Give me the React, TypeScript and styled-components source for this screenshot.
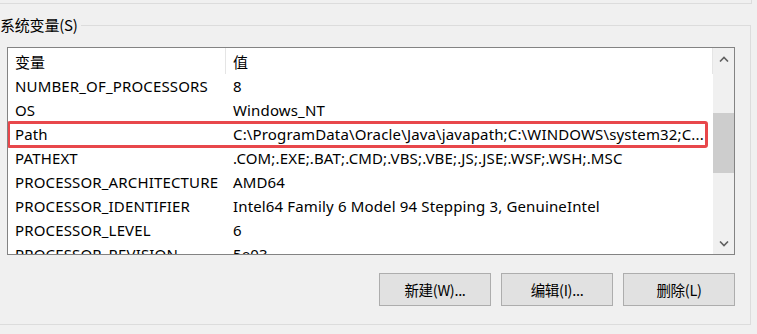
import React from "react";
import styled, { createGlobalStyle } from "styled-components";

const Global = createGlobalStyle`
  html, body { margin: 0; padding: 0; background: #f0f0f0; overflow: hidden; }
  body { font-family: "Noto Sans", "Noto Sans CJK SC", sans-serif; font-size: 15px; color: #000; }
`;

const Page = styled.div`
  width: 757px;
  height: 334px;
  background: #f0f0f0;
`;

const PrevPanel = styled.div`
  width: 751px;
  height: 3px;
  border-right: 1px solid #dcdcdc;
  border-bottom: 1px solid #dcdcdc;
`;

const Group = styled.div`
  position: relative;
  margin-top: 21px;
  width: 751px;
  height: 300px;
  border-top: 1px solid #dcdcdc;
  border-right: 1px solid #dcdcdc;
  border-bottom: 1px solid #dcdcdc;
  padding: 21px 15px 0 7px;
  box-sizing: border-box;
  display: flex;
  flex-direction: column;
`;

const Legend = styled.span`
  position: absolute;
  left: 0;
  top: -12px;
  padding-right: 3px;
  background: #f0f0f0;
  line-height: 22px;
  font-family: "Noto Sans CJK SC", sans-serif;
  font-size: 15px;
  letter-spacing: -0.2px;
`;

const ListBox = styled.div`
  height: 208px;
  border: 1px solid #838383;
  background: #fff;
  box-sizing: border-box;
  display: flex;
  overflow: hidden;
`;

const ListMain = styled.div`
  flex: 1;
  display: flex;
  flex-direction: column;
  min-width: 0;
`;

const Header = styled.div`
  display: grid;
  grid-template-columns: 218px 1fr;
  height: 26px;
  align-items: center;
  flex-shrink: 0;
`;

const HeadCell = styled.div`
  height: 26px;
  display: flex;
  align-items: center;
  padding-left: 7px;
  border-right: 1px solid #e5e5e5;
  font-family: "Noto Sans CJK SC", sans-serif;
  font-size: 15px;
  box-sizing: border-box;
`;

const Row = styled.div<{ $marked?: boolean }>`
  position: relative;
  display: grid;
  grid-template-columns: 218px 1fr;
  height: 24px;
  align-items: center;
  flex-shrink: 0;
  ${(p) =>
    p.$marked &&
    `
    &::after {
      content: "";
      position: absolute;
      left: -1px;
      right: 5px;
      top: -1px;
      bottom: -2px;
      border: 3px solid #e8474b;
      border-radius: 3px;
    }
  `}
`;

const Cell = styled.div`
  padding-left: 7px;
  white-space: nowrap;
  overflow: hidden;
  letter-spacing: 0.15px;
`;

const ScrollBar = styled.div`
  width: 21px;
  background: #f0f0f0;
  display: flex;
  flex-direction: column;
  align-items: stretch;
  flex-shrink: 0;
`;

const ArrowBtn = styled.div`
  height: 21px;
  display: flex;
  align-items: center;
  justify-content: center;
`;

const Track = styled.div`
  flex: 1;
  display: flex;
  flex-direction: column;
`;

const Thumb = styled.div`
  margin-top: 44px;
  height: 60px;
  background: #cdcdcd;
`;

const Buttons = styled.div`
  display: flex;
  justify-content: flex-end;
  gap: 10px;
  margin-top: 18px;
`;

const Button = styled.button`
  width: 112px;
  height: 33px;
  background: #e1e1e1;
  border: 1px solid #adadad;
  font-family: "Noto Sans CJK SC", sans-serif;
  font-size: 14.5px;
  color: #000;
  padding: 0;
  letter-spacing: -0.3px;
`;

const rows: [string, string][] = [
  ["NUMBER_OF_PROCESSORS", "8"],
  ["OS", "Windows_NT"],
  ["Path", "C:\\ProgramData\\Oracle\\Java\\javapath;C:\\WINDOWS\\system32;C..."],
  ["PATHEXT", ".COM;.EXE;.BAT;.CMD;.VBS;.VBE;.JS;.JSE;.WSF;.WSH;.MSC"],
  ["PROCESSOR_ARCHITECTURE", "AMD64"],
  ["PROCESSOR_IDENTIFIER", "Intel64 Family 6 Model 94 Stepping 3, GenuineIntel"],
  ["PROCESSOR_LEVEL", "6"],
  ["PROCESSOR_REVISION", "5e03"],
];

const Chevron = ({ up }: { up?: boolean }) => (
  <svg width="10" height="6" viewBox="0 0 10 6">
    <path
      d={up ? "M1 5.5 L5 1.5 L9 5.5" : "M1 0.5 L5 4.5 L9 0.5"}
      fill="none"
      stroke="#606060"
      strokeWidth="1.6"
    />
  </svg>
);

export default function App() {
  return (
    <Page>
      <Global />
      <PrevPanel />
      <Group>
        <Legend>系统变量(S)</Legend>
        <ListBox>
          <ListMain>
            <Header>
              <HeadCell>变量</HeadCell>
              <HeadCell>值</HeadCell>
            </Header>
            {rows.map(([k, v]) => (
              <Row key={k} $marked={k === "Path"}>
                <Cell>{k}</Cell>
                <Cell>{v}</Cell>
              </Row>
            ))}
          </ListMain>
          <ScrollBar>
            <ArrowBtn>
              <Chevron up />
            </ArrowBtn>
            <Track>
              <Thumb />
            </Track>
            <ArrowBtn>
              <Chevron />
            </ArrowBtn>
          </ScrollBar>
        </ListBox>
        <Buttons>
          <Button>新建(W)...</Button>
          <Button>编辑(I)...</Button>
          <Button>删除(L)</Button>
        </Buttons>
      </Group>
    </Page>
  );
}
